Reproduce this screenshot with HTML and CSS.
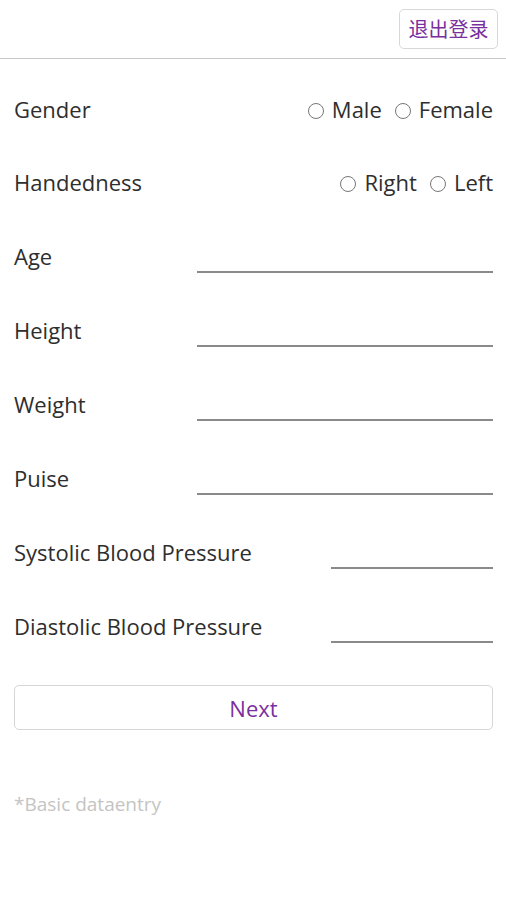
FILE: index.html
```html
<!DOCTYPE html>
<html lang="en">
<head>
<meta charset="utf-8">
<link rel="stylesheet" href="styles.css">
</head>
<body>
<header class="topbar">
  <button class="logout">退出登录</button>
</header>
<main class="form">
  <div class="row">
    <span class="label">Gender</span>
    <div class="choices">
      <label class="choice"><span class="radio"></span>Male</label>
      <label class="choice"><span class="radio"></span>Female</label>
    </div>
  </div>
  <div class="row">
    <span class="label">Handedness</span>
    <div class="choices">
      <label class="choice"><span class="radio"></span>Right</label>
      <label class="choice"><span class="radio"></span>Left</label>
    </div>
  </div>
  <div class="row">
    <span class="label">Age</span>
    <span class="field"></span>
  </div>
  <div class="row">
    <span class="label">Height</span>
    <span class="field"></span>
  </div>
  <div class="row">
    <span class="label">Weight</span>
    <span class="field"></span>
  </div>
  <div class="row">
    <span class="label">Puise</span>
    <span class="field"></span>
  </div>
  <div class="row">
    <span class="label">Systolic Blood Pressure</span>
    <span class="field short"></span>
  </div>
  <div class="row">
    <span class="label">Diastolic Blood Pressure</span>
    <span class="field short"></span>
  </div>
  <button class="next">Next</button>
  <p class="note">*Basic dataentry</p>
</main>
</body>
</html>
```
FILE: styles.css
```css
* { box-sizing: border-box; }
html, body { margin: 0; padding: 0; background: #fff; }
body {
  font-family: "Open Sans", "Noto Sans CJK SC", sans-serif;
  color: #2e2e2e;
  font-size: 22px;
}
.topbar {
  height: 59px;
  border-bottom: 1px solid #c8c8c8;
  display: flex;
  justify-content: flex-end;
  align-items: center;
  padding-right: 8px;
}
.logout {
  height: 40px;
  width: 99px;
  padding: 0;
  border: 1px solid #d8d8d8;
  border-radius: 5px;
  background: #fff;
  color: #7a2f9e;
  font-family: "Noto Sans CJK SC", sans-serif;
  font-size: 20px;
  margin-top: -1px;
}
.form {
  padding: 14px 13px 0 14px;
  display: flex;
  flex-direction: column;
}
.row {
  height: 74px;
  display: flex;
  align-items: center;
  justify-content: space-between;
}
.row:first-child { height: 72px; }
.label { line-height: 26px; }
.choices { display: flex; gap: 13px; }
.choice { display: flex; align-items: center; }
.radio {
  width: 16px;
  height: 16px;
  border: 1px solid #777;
  border-radius: 50%;
  margin-right: 8px;
  margin-top: 3px;
}
.field {
  width: 296px;
  height: 34px;
  border-bottom: 2px solid #8a8a8a;
}
.field.short { width: 162px; }
.next {
  margin-top: 22px;
  height: 45px;
  border: 1px solid #d6d6d6;
  border-radius: 5px;
  background: #fff;
  color: #7a2f9e;
  font-family: "Open Sans", sans-serif;
  font-size: 22px;
}
.note {
  margin: 61px 0 0;
  color: #c4c4c4;
  font-size: 19px;
  line-height: 26px;
}
```
